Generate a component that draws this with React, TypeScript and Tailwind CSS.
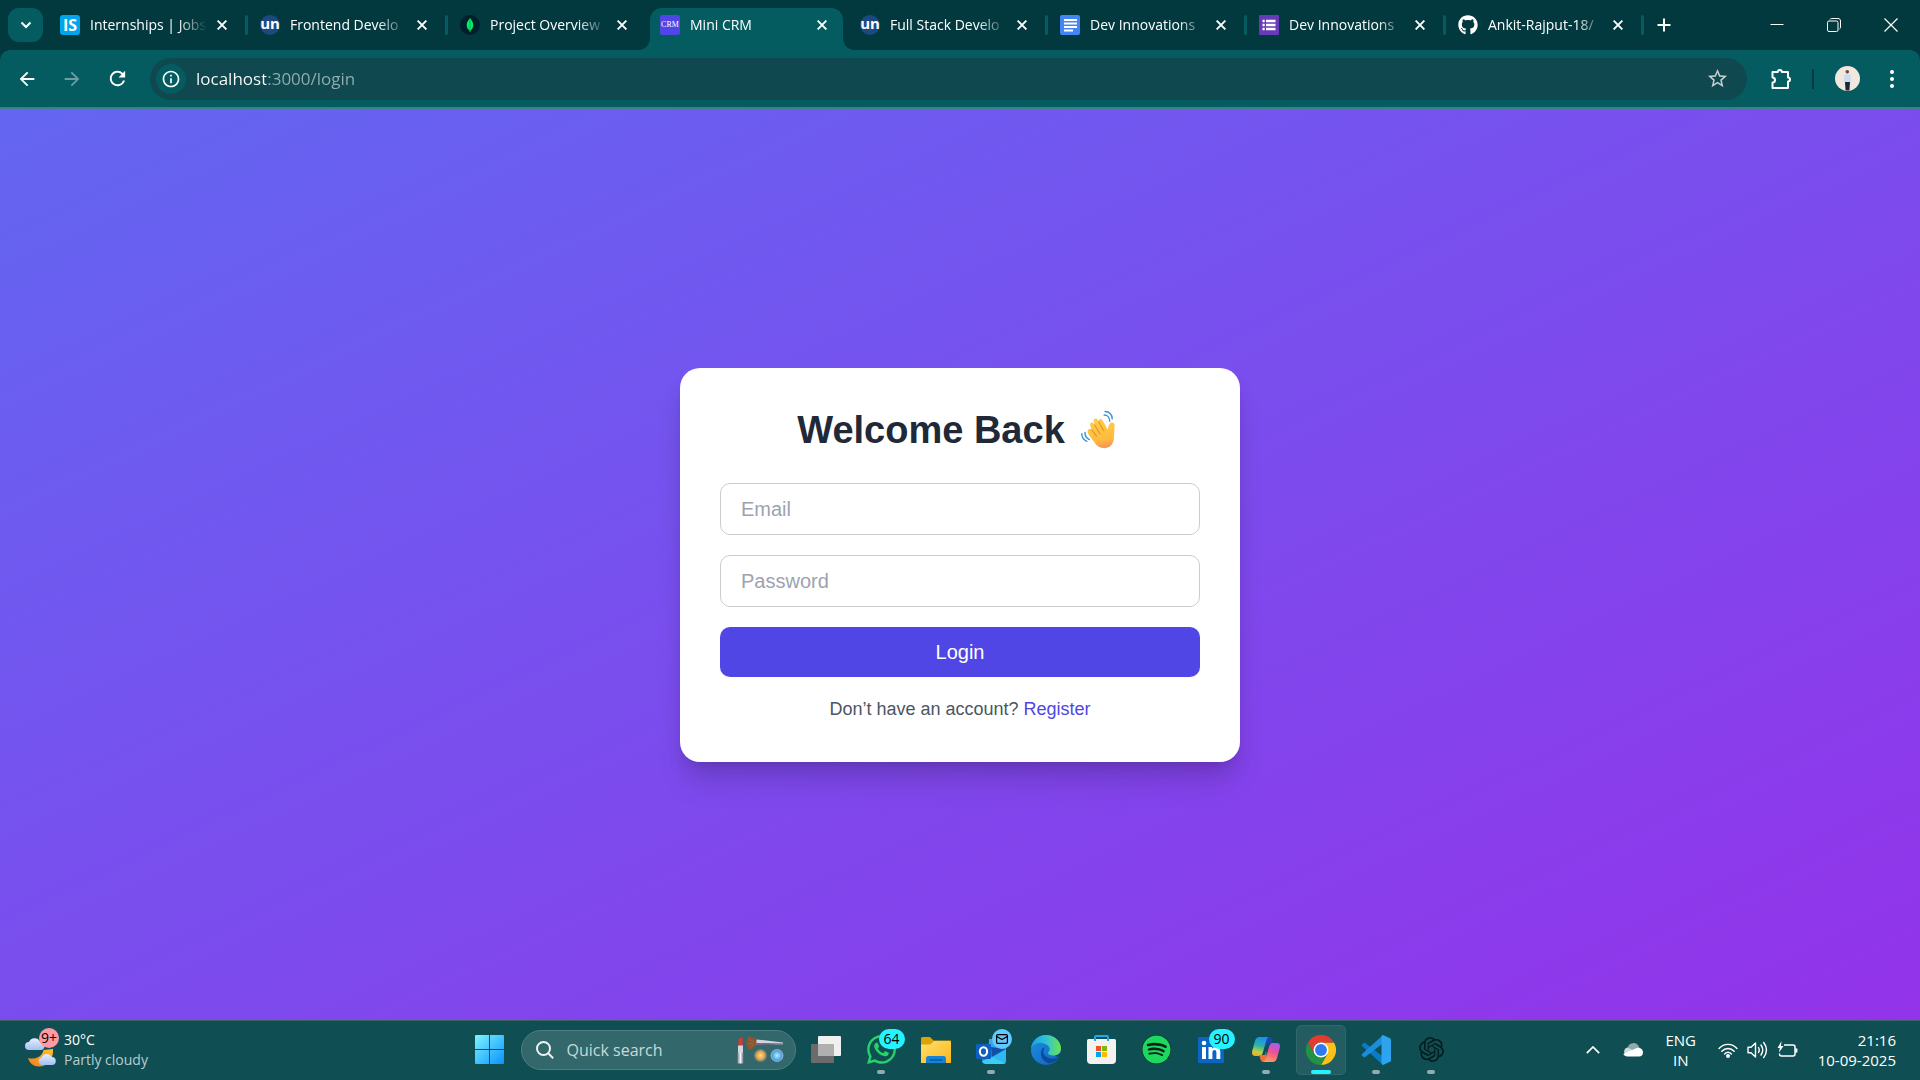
import { useState, type ReactNode } from "react";
import { FaGithub, FaSpotify, FaWhatsapp } from "react-icons/fa6";
import { SiOpenai } from "react-icons/si";
import { MdArrowBack, MdArrowForward, MdInfoOutline, MdRefresh, MdStarBorder } from "react-icons/md";

const uiFont = "font-['Segoe_UI','Open_Sans','Noto_Sans',sans-serif]";

/* ---------- favicons ---------- */

const InternshalaIcon = () => (
  <span className="flex size-5 shrink-0 items-center justify-center rounded-[3px] bg-[#00a5ec] font-['Open_Sans',sans-serif] text-[16px] leading-5 font-bold text-white">
    IS
  </span>
);

const UnstopIcon = () => (
  <span className="flex size-5 shrink-0 items-center justify-center rounded-full bg-[#1c4980] pb-1 font-['Open_Sans',sans-serif] text-[15px] leading-5 font-bold text-white">
    un
  </span>
);

const MongoIcon = () => (
  <svg viewBox="0 0 20 20" className="size-5 shrink-0">
    <circle cx="10" cy="10" r="10" fill="#001e2b" />
    <path d="M10 3c.9 1.600 3.300 3.300 3.300 7.200 0 2.700-1.500 4.400-2.800 5.300L10.300 17h-.6l-.2-1.500c-1.300-.9-2.800-2.600-2.800-5.300C6.700 6.300 9.100 4.600 10 3z" fill="#00ed64" />
    <path d="M10 3.500v13" stroke="#00a046" strokeWidth=".6" />
  </svg>
);

const CrmIcon = () => (
  <span className="flex size-5 shrink-0 items-center justify-center rounded-[2px] bg-[#4f46e5] font-['Liberation_Serif',serif] text-[8px] leading-5 text-white">
    CRM
  </span>
);

const DocsIcon = () => (
  <svg viewBox="0 0 20 20" className="size-5 shrink-0">
    <rect width="20" height="20" rx="2" fill="#4285f4" />
    <path d="M4 5h13M4 8.500h13M4 12h13M4 15.500h9" stroke="#fff" strokeWidth="2" />
  </svg>
);

const FormsIcon = () => (
  <svg viewBox="0 0 20 20" className="size-5 shrink-0">
    <rect width="20" height="20" rx="1" fill="#673ab7" />
    <path d="M3.500 6h2.200M3.500 10h2.200M3.500 14h2.200M7 6h9.500M7 10h9.500M7 14h9.500" stroke="#fff" strokeWidth="2.300" />
  </svg>
);

type Tab = { title: string; icon: ReactNode; width: string; active?: boolean; beforeActive?: boolean };

const tabs: Tab[] = [
  { title: "Internships | Jobs", icon: <InternshalaIcon />, width: "w-[200px]" },
  { title: "Frontend Develo", icon: <UnstopIcon />, width: "w-[200px]" },
  { title: "Project Overview", icon: <MongoIcon />, width: "w-[200px]", beforeActive: true },
  { title: "Mini CRM", icon: <CrmIcon />, width: "w-[200px]", active: true },
  { title: "Full Stack Develo", icon: <UnstopIcon />, width: "w-[200px]" },
  { title: "Dev Innovations", icon: <DocsIcon />, width: "w-[199px]" },
  { title: "Dev Innovations", icon: <FormsIcon />, width: "w-[199px]" },
  { title: "Ankit-Rajput-18/", icon: <FaGithub className="size-5 shrink-0 text-white" />, width: "w-[198px]" },
];

const CloseGlyph = () => (
  <svg viewBox="0 0 10 10" className="size-[10px]" fill="none" stroke="#fff" strokeWidth="1.900">
    <path d="M.6.6l8.800 8.800M9.400.6L.6 9.400" />
  </svg>
);

function BrowserTab({ tab }: { tab: Tab }) {
  return (
    <div className={`relative flex h-[50px] items-center pl-3 ${tab.width}`}>
      {tab.active && (
        <svg viewBox="0 0 217 42" preserveAspectRatio="none" className="absolute bottom-0 -left-[10px] h-[42px] w-[217px]" fill="#045c61">
          <path d="M0 42c7 0 12-5 12-12V12C12 5 17 0 24 0h169c7 0 12 5 12 12v18c0 7 5 12 12 12z" />
        </svg>
      )}
      <button className="relative flex min-w-0 flex-1 items-center text-left">
        {tab.icon}
        <span className="ml-[10px] w-[117px] overflow-hidden text-[14px] leading-5 whitespace-nowrap text-white mask-r-from-75% mask-r-to-100%">
          {tab.title}
        </span>
      </button>
      <button aria-label={`Close ${tab.title}`} className="relative mr-5 p-[1px]">
        <CloseGlyph />
      </button>
      {!tab.active && !tab.beforeActive && <span className="absolute top-[15px] right-0 h-5 w-[3px] rounded bg-[#045c61]" />}
    </div>
  );
}

function TabStrip() {
  return (
    <div className="flex h-[50px] items-center bg-[#02393e] pl-2">
      <button aria-label="Search tabs" className="mr-[5px] flex h-[34px] w-[35px] items-center justify-center rounded-[11px] bg-[#045c61]">
        <svg viewBox="0 0 12 8" className="h-2 w-3" fill="none" stroke="#fff" strokeWidth="2">
          <path d="M1.500 1.500L6 6l4.500-4.500" />
        </svg>
      </button>
      {tabs.map((t, i) => (
        <BrowserTab key={i} tab={t} />
      ))}
      <button aria-label="New tab" className="ml-3 p-[1px]">
        <svg viewBox="0 0 14 14" className="size-[14px]" stroke="#fff" strokeWidth="2">
          <path d="M7 .5v13M.5 7h13" />
        </svg>
      </button>
      <div className="ml-auto flex items-center pr-[1px]">
        <button aria-label="Minimise" className="flex w-[57px] justify-center">
          <svg viewBox="0 0 14 14" className="size-[14px]" stroke="#fff">
            <path d="M.5 6.500h13" />
          </svg>
        </button>
        <button aria-label="Restore" className="flex w-[57px] justify-center">
          <svg viewBox="0 0 14 14" className="size-[14px]" fill="none" stroke="#fff">
            <rect x=".5" y="3" width="10.500" height="10.500" rx="1.500" />
            <path d="M3 1.500C3.300.8 4 .5 4.800.5H11c1.500 0 2.500 1 2.500 2.500v6.200c0 .8-.3 1.500-1 1.800" />
          </svg>
        </button>
        <button aria-label="Close window" className="flex w-[57px] justify-center">
          <svg viewBox="0 0 14 14" className="size-[14px]" stroke="#fff" strokeWidth="1.200">
            <path d="M.5.5l13 13M13.500.5l-13 13" />
          </svg>
        </button>
      </div>
    </div>
  );
}

function Toolbar() {
  const [url, setUrl] = useState("localhost:3000/login");
  return (
    <div className="bg-[#02393e]">
      <div className="flex h-[59px] items-center rounded-t-[10px] border-b-2 border-[#3b8085] bg-[#045c61] pr-5 pl-4">
        <button aria-label="Back" className="mr-[23px]"><MdArrowBack className="size-[22px] text-white" /></button>
        <button aria-label="Forward" className="mr-[23px]"><MdArrowForward className="size-[22px] text-[#6b9ea1]" /></button>
        <button aria-label="Reload" className="mr-[21px]"><MdRefresh className="size-[23px] text-white" /></button>
        <div className="flex h-[42px] flex-1 items-center rounded-full bg-[#0f484e] pr-[18px] pl-[6px]">
          <button aria-label="Site information" className="flex size-[30px] items-center justify-center rounded-full bg-[#045c61]">
            <MdInfoOutline className="size-5 text-white" />
          </button>
          <input
            aria-label="Address"
            value={url}
            onChange={(e) => setUrl(e.target.value)}
            className="ml-[10px] min-w-0 flex-1 bg-[linear-gradient(90deg,#ffffff_70px,#92b0b3_70px)] bg-clip-text pt-[1px] text-[17px] leading-6 text-transparent caret-white outline-none"
          />
          <button aria-label="Bookmark this page"><MdStarBorder className="size-[23px] text-[#c3cfd0]" /></button>
        </div>
        <button aria-label="Extensions" className="ml-[23px]">
          <svg viewBox="0 0 22 22" className="size-[22px]" fill="none" stroke="#fff" strokeWidth="2" strokeLinejoin="round">
            <path d="M2.500 4h5.300a2 2 0 0 1 4 0h6.200v5.500a2 2 0 0 1 0 4V20H2.500v-5.500a2.500 2.500 0 0 0 0-5z" />
          </svg>
        </button>
        <span className="ml-[20px] h-5 w-[2px] bg-[#023b40]" />
        <button aria-label="Profile" className="ml-[21px]">
          <svg viewBox="0 0 25 25" className="size-[25px]">
            <circle cx="12.500" cy="12.500" r="12.500" fill="#f1e7df" />
            <path d="M9.500 9c1-1.500 5-1.500 6 0l.8 7.500H8.700z" fill="#c9dcf2" />
            <path d="M10 16h5l-.6 8.600h-3.800z" fill="#1f2530" />
            <circle cx="12.300" cy="5.800" r="1.800" fill="#6a4a3c" />
          </svg>
        </button>
        <button aria-label="Menu" className="ml-[24px]">
          <svg viewBox="0 0 16 20" className="h-5 w-4" fill="#fff">
            <circle cx="8" cy="3" r="2" />
            <circle cx="8" cy="10" r="2" />
            <circle cx="8" cy="17" r="2" />
          </svg>
        </button>
      </div>
    </div>
  );
}

/* ---------- login page ---------- */

const WavingHand = () => (
  <svg viewBox="0 0 52 45" className="h-[42px] w-[49px]" role="img" aria-label="Waving hand">
    <defs>
      <linearGradient id="hand" x1="0" y1="0" x2=".2" y2="1">
        <stop offset="0" stopColor="#ffcf4c" />
        <stop offset=".8" stopColor="#ffbb3e" />
        <stop offset="1" stopColor="#f79a55" />
      </linearGradient>
    </defs>
    <path
      d="M14.500 23c.8-2 2.800-2.400 4.300-.8l-1.700-4.400c-1.100-3 2.300-4.600 3.900-1.900l.8 1.300-1-4c-.8-3 3-4.300 4.400-1.400l.8 1.800c-.7-3 3.200-4.200 4.500-1.400l5.300 9.800 1.500-5.200c1.300-3.600 6.300-2.600 6 1.200L42.500 31c-.5 6.800-4.500 11-10.500 11-4.300 0-7.500-2.200-9.800-5.300l-7-9.700c-.9-1.300-1.200-2.700-.7-4z"
      fill="url(#hand)"
    />
    <path d="M18.800 22.200l5 6.800M21.800 17.200l5.700 9.300M26.200 13.600l5.300 9.600" stroke="#e39428" strokeWidth="1.200" strokeLinecap="round" fill="none" />
    <path d="M32 6.500c3.500 0 6 2.700 6 6.500M33 2.700c4.500 0 7.700 3.300 7.700 7.800M11.500 25c-.2 3.500 1.500 6.300 4.700 7.700M8 26.500c.2 4 2.200 6.700 5.500 8.200" stroke="#3192dc" strokeWidth="1.500" strokeLinecap="round" fill="none" />
  </svg>
);

function LoginPage() {
  return (
    <main className="flex flex-1 items-center justify-center bg-[linear-gradient(to_bottom_right,#6366f1,#9333ea)] font-['Liberation_Sans',Arial,sans-serif]">
      <div className="w-full max-w-[560px] rounded-[20px] bg-white p-10 shadow-[0_12px_19px_-4px_rgba(0,0,0,0.1),0_5px_8px_-5px_rgba(0,0,0,0.1),0_25px_32px_-6px_rgba(0,0,0,0.12)]">
        <h2 className="mb-[30px] flex h-[45px] items-center justify-center gap-[9px] text-[38px] leading-[45px] font-bold text-[#1f2937]">
          Welcome Back <WavingHand />
        </h2>
        <form className="flex flex-col gap-5" onSubmit={(e) => e.preventDefault()}>
          <input
            type="email"
            aria-label="Email"
            placeholder="Email"
            className="w-full rounded-[10px] border border-[#cccccc] px-5 py-[10px] text-xl leading-[30px] text-[#1f2937] placeholder:text-[#9ca3af]"
          />
          <input
            type="password"
            aria-label="Password"
            placeholder="Password"
            className="w-full rounded-[10px] border border-[#cccccc] px-5 py-[10px] text-xl leading-[30px] text-[#1f2937] placeholder:text-[#9ca3af]"
          />
          <button type="submit" className="w-full rounded-[10px] bg-[#4f46e5] py-[10px] text-xl leading-[30px] text-white">
            Login
          </button>
        </form>
        <p className="mt-5 text-center text-[18px] leading-[25px] text-[#4b5563]">
          Don’t have an account?{" "}
          <a href="#register" className="text-[#4f46e5]">
            Register
          </a>
        </p>
      </div>
    </main>
  );
}

/* ---------- taskbar icons ---------- */

const WeatherIcon = () => (
  <svg viewBox="0 0 34 36" className="h-9 w-[34px]">
    <defs>
      <linearGradient id="cloud" x1="0" y1="0" x2="0" y2="1">
        <stop offset="0" stopColor="#e6effd" />
        <stop offset="1" stopColor="#a3c0f0" />
      </linearGradient>
      <linearGradient id="moon" x1="1" y1="0" x2="0" y2="1">
        <stop offset="0" stopColor="#ffc02e" />
        <stop offset="1" stopColor="#ef7d1c" />
      </linearGradient>
    </defs>
    <path d="M28 17c.8 10-5.500 17.500-14 17.500-5.500 0-9.500-3.500-11-8.500 7 2 14-1 15.500-8z" fill="url(#moon)" />
    <path d="M4 18a4 4 0 0 1 0-8 6 6 0 0 1 11-.5 4.500 4.500 0 0 1 2 8.500z" fill="url(#cloud)" />
    <path d="M16 33a4 4 0 0 1 .5-7.500 5.500 5.500 0 0 1 10-.5A4 4 0 0 1 27 33z" fill="url(#cloud)" />
  </svg>
);

const StartIcon = () => (
  <svg viewBox="0 0 29 29" className="size-[29px]">
    <defs>
      <linearGradient id="win" x1="0" y1="0" x2="1" y2="1">
        <stop offset="0" stopColor="#7df3ff" />
        <stop offset="1" stopColor="#0a93fb" />
      </linearGradient>
    </defs>
    <path d="M0 1q0-1 1-1h13v14H0zM15 0h13q1 0 1 1v13H15zM0 15h14v14H1q-1 0-1-1zM15 15h14v13q0 1-1 1H15z" fill="url(#win)" />
  </svg>
);

const MakeupArt = () => (
  <svg viewBox="0 0 48 28" className="h-7 w-12">
    <defs>
      <linearGradient id="metal" x1="0" y1="0" x2="1" y2="0">
        <stop offset="0" stopColor="#81869a" />
        <stop offset=".5" stopColor="#f2f3f8" />
        <stop offset="1" stopColor="#6b7085" />
      </linearGradient>
      <radialGradient id="gold"><stop offset="0" stopColor="#fbe08a" /><stop offset="1" stopColor="#cf962f" /></radialGradient>
      <radialGradient id="blue"><stop offset="0" stopColor="#c4efff" /><stop offset="1" stopColor="#2f9ee8" /></radialGradient>
    </defs>
    <path d="M1.500 10V3.500L5.500.5V10z" fill="#e8322c" />
    <rect x="1" y="9.500" width="5" height="8" fill="#d5d7e0" />
    <rect x=".5" y="16.500" width="6" height="11" fill="url(#metal)" />
    <path d="M11.500.5c4-.5 8 2 9 5.500-.5 4-4.500 7.500-8.500 8-3-3-4-10-.5-13.500z" fill="#8a5632" />
    <path d="M12 3.500l5 2.500M11 8l5-.5M12.500 12l4-3.500" stroke="#a8703f" strokeWidth=".7" />
    <path d="M19.500 3.500L46 6.500v2l-26.500.5z" fill="#d2d5df" />
    <path d="M19.500 7L46 7.500v1l-26.500 1z" fill="#60657c" />
    <circle cx="23.500" cy="19.500" r="6.500" fill="#727a92" />
    <circle cx="23.500" cy="19.500" r="5.200" fill="url(#gold)" />
    <circle cx="40" cy="19.500" r="6.500" fill="#93a8c0" />
    <circle cx="40" cy="19.500" r="5.200" fill="url(#blue)" />
  </svg>
);

const TaskViewIcon = () => (
  <svg viewBox="0 0 30 27" className="h-[27px] w-[30px]">
    <rect y="8" width="23" height="19" rx="1" fill="#6b6b6b" />
    <rect x="7" width="23" height="20" rx="1" fill="#f0f0f0" />
    <path d="M7 8h15a1 1 0 0 1 1 1v11H8a1 1 0 0 1-1-1z" fill="#b0b0b0" />
  </svg>
);

const ExplorerIcon = () => (
  <svg viewBox="0 0 30 26" className="h-[26px] w-[30px]">
    <defs>
      <linearGradient id="folder" x1="0" y1="0" x2="1" y2="1">
        <stop offset="0" stopColor="#ffdf70" />
        <stop offset="1" stopColor="#fbb818" />
      </linearGradient>
    </defs>
    <path d="M0 1.500Q0 0 1.500 0H9l3.500 3.500H30V10H0z" fill="#e0a106" />
    <path d="M0 7.500h9.500L13 4h15.500Q30 4 30 5.500V26H0z" fill="url(#folder)" />
    <path d="M5 26v-4.500Q5 19 7.500 19h15q2.500 0 2.500 2.500V26z" fill="#1583d8" />
    <path d="M9 23h12" stroke="#0b5aa5" strokeWidth="1.400" strokeLinecap="round" />
  </svg>
);

const OutlookIcon = () => (
  <svg viewBox="0 0 30 30" className="size-[30px]">
    <path d="M6 13L18 4.500 30 13v14a2 2 0 0 1-2 2H10a4 4 0 0 1-4-4z" fill="#1b86da" />
    <path d="M13 4h13v14H13z" fill="#36a7ec" />
    <path d="M30 13L16 20.500V28h12q2 0 2-2z" fill="#2fb9f2" />
    <path d="M15 12l15 2-14 8z" fill="#1450a8" />
    <path d="M6 26l10-4 13 6.500q-1 .5-2 .5H10q-3 0-4-3z" fill="#3ccdf5" />
    <rect y="9" width="15" height="15" rx="1.300" fill="#0f5fc0" />
    <ellipse cx="7.500" cy="16.500" rx="3.600" ry="4.200" fill="none" stroke="#fff" strokeWidth="2.100" />
  </svg>
);

const EdgeIcon = () => (
  <svg viewBox="0 0 30 30" className="size-[30px]">
    <defs>
      <linearGradient id="edgeTop" x1="0" y1=".3" x2="1" y2=".3">
        <stop offset="0" stopColor="#1b9ee8" />
        <stop offset=".5" stopColor="#31c3d6" />
        <stop offset="1" stopColor="#6be34e" />
      </linearGradient>
      <linearGradient id="edgeLeft" x1="0" y1="0" x2="1" y2="1">
        <stop offset="0" stopColor="#1a92e0" />
        <stop offset="1" stopColor="#1460c0" />
      </linearGradient>
    </defs>
    <circle cx="15" cy="15" r="15" fill="url(#edgeLeft)" />
    <path d="M0 13.500C1 5.500 7 0 15 0c9 0 15 6.500 15 13.500 0 4.500-3.500 7-7.500 7-3.500 0-5.500-1.200-5.500-2.500 0-1 1.700-1.500 1.700-4C18.700 10.500 14 8 9.500 8 5 8 1.500 10 0 13.500z" fill="url(#edgeTop)" />
    <path d="M11 14c-3 5 0 12 7 14.500 3.500-.3 8-3 10-6.500-6 3-14 1.500-15.500-4C12 16 12.500 14 14 12.500c-1.500 0-2.500.8-3 1.500z" fill="#0c4a9a" />
    <path d="M24 20.400c3-.1 5.300-1.700 5.900-4 .2 2-.5 4-1.600 5.600l-1.500.5c.3-.9-.8-.9-2.800-2.100z" fill="#0f4f54" />
  </svg>
);

const StoreIcon = () => (
  <svg viewBox="0 0 29 29" className="size-[29px]">
    <path d="M8 7V2q0-1 1-1h11q1 0 1 1v5" fill="none" stroke="#22a7ec" strokeWidth="2" />
    <path d="M0 5.500Q0 4 1.500 4h26Q29 4 29 5.500V25q0 4-4 4H4q-4 0-4-4z" fill="#f3f2f1" />
    <path d="M8 6V3M21 6V3" stroke="#22a7ec" strokeWidth="2" />
    <path d="M9 11h5v5H9z" fill="#f25022" />
    <path d="M15 11h5v5h-5z" fill="#7fba00" />
    <path d="M9 17h5v5H9z" fill="#00a4ef" />
    <path d="M15 17h5v5h-5z" fill="#ffb900" />
  </svg>
);

const SpotifyIcon = () => (
  <span className="rounded-full bg-[#0c1f18]">
    <FaSpotify className="size-[29px] text-[#1ed760]" />
  </span>
);

const LinkedInIcon = () => (
  <svg viewBox="0 0 26 26" className="size-[26px]">
    <rect width="26" height="26" rx="1" fill="#0a66c2" />
    <circle cx="6" cy="6" r="2.300" fill="#fff" />
    <path d="M4 10h4v12H4zM10.500 10h3.700v1.700c.8-1.300 2.200-2 3.800-2 3.400 0 4.300 2.300 4.300 5.500V22h-3.900v-6c0-1.600-.3-2.900-1.900-2.900s-2.100 1.200-2.100 2.800V22h-3.900z" fill="#fff" />
  </svg>
);

const CopilotIcon = () => (
  <svg viewBox="0 0 28 25" className="h-[25px] w-7">
    <defs>
      <linearGradient id="cpA" x1=".5" y1="0" x2=".3" y2="1">
        <stop offset="0" stopColor="#1a8ff0" />
        <stop offset=".45" stopColor="#2bb3a8" />
        <stop offset=".8" stopColor="#c8cf3a" />
        <stop offset="1" stopColor="#f5a623" />
      </linearGradient>
      <linearGradient id="cpB" x1=".7" y1="0" x2=".4" y2="1">
        <stop offset="0" stopColor="#a35cf0" />
        <stop offset=".5" stopColor="#f0538f" />
        <stop offset="1" stopColor="#ff9a5c" />
      </linearGradient>
    </defs>
    <path d="M14 0h3c2 0 2.700 1.500 3.200 3.500L21 7h-5l-3 4z" fill="#1747b5" />
    <path d="M7.500 0H17c-1.500.5-2.300 2-3 4.500L11 15c-.8 3-2 4-4.500 4H3c-3 0-3.500-2.500-2.500-6l2.300-8.500C3.700 1.500 5 0 7.500 0z" fill="url(#cpA)" />
    <path d="M7 18h6l1-4 1 11h-3.500c-2 0-2.700-1.500-3.200-3.500z" fill="#f0703c" />
    <path d="M20.500 25H11c1.500-.5 2.300-2 3-4.500L17 10c.8-3 2-4 4.500-4H25c3 0 3.500 2.500 2.500 6l-2.300 8.500c-.9 3-2.200 4.500-4.700 4.500z" fill="url(#cpB)" />
  </svg>
);

const ChromeIcon = () => (
  <svg viewBox="0 0 48 48" className="size-[30px]">
    <path d="M24 12h20.800A24 24 0 0 1 24 48l10.400-18z" fill="#fbc116" />
    <path d="M3.200 12A24 24 0 0 0 24 48l10.400-18a12 12 0 0 1-20.800 0z" fill="#229342" />
    <path d="M3.200 12A24 24 0 0 1 44.800 12H24a12 12 0 0 0-10.400 18z" fill="#e33b2e" />
    <circle cx="24" cy="24" r="12" fill="#fff" />
    <circle cx="24" cy="24" r="9.500" fill="#2f7af0" />
  </svg>
);

const VsCodeIcon = () => (
  <svg viewBox="0 0 30 30" className="size-[30px]">
    <path d="M22 30L1 11q-.8-.8 0-1.500l1.700-1.500q.7-.6 1.500 0L22.500 22z" fill="#0b7bc8" />
    <path d="M22 0L1 19q-.8.800 0 1.500L2.700 22q.7.600 1.500 0L22.500 8z" fill="#1a8ddb" />
    <path d="M22 0l7 3.200q1 .5 1 1.600v20.400q0 1.100-1 1.600L22 30q-1.500-.3-1.500-2V2q0-1.700 1.500-2z" fill="#2ea3ee" />
  </svg>
);

const Badge = ({ children }: { children: ReactNode }) => (
  <span className="absolute top-2 left-[25px] flex h-5 w-[26px] items-center justify-center rounded-full bg-[#26f3ff] text-[14px] leading-5 text-black">
    {children}
  </span>
);

const MailBadge = () => (
  <span className="absolute top-2 left-[28px] flex size-5 items-center justify-center rounded-full bg-[#63c8ff]">
    <svg viewBox="0 0 12 10" className="h-[10px] w-3" fill="none" stroke="#000" strokeWidth="1.200">
      <rect x=".6" y=".6" width="10.800" height="8.800" rx="1.200" />
      <path d="M.8 2.500L6 5.500l5.200-3" />
    </svg>
  </span>
);

type App = { name: string; icon: ReactNode; badge?: ReactNode; state?: "open" | "active" };

const apps: App[] = [
  { name: "Task view", icon: <TaskViewIcon /> },
  { name: "WhatsApp", icon: <FaWhatsapp className="size-[33px] text-[#25d366]" />, badge: <Badge>64</Badge>, state: "open" },
  { name: "File Explorer", icon: <ExplorerIcon /> },
  { name: "Outlook", icon: <OutlookIcon />, badge: <MailBadge />, state: "open" },
  { name: "Edge", icon: <EdgeIcon /> },
  { name: "Microsoft Store", icon: <StoreIcon /> },
  { name: "Spotify", icon: <SpotifyIcon /> },
  { name: "LinkedIn", icon: <LinkedInIcon />, badge: <Badge>90</Badge> },
  { name: "Copilot", icon: <CopilotIcon />, state: "open" },
  { name: "Chrome", icon: <ChromeIcon />, state: "active" },
  { name: "Visual Studio Code", icon: <VsCodeIcon />, state: "open" },
  { name: "ChatGPT", icon: <SiOpenai className="size-[25px] text-[#051c1f]" />, state: "open" },
];

function Taskbar() {
  return (
    <footer className="grid h-[60px] grid-cols-[1fr_auto_1fr] items-center border-t border-[#3a6263] bg-[#0f4f54] pb-[2px]">
      <button className="relative flex items-center pl-[25px] text-left">
        <WeatherIcon />
        <span className="absolute -top-[2px] left-[39px] flex size-5 items-center justify-center rounded-full bg-[#ff99a4] text-[14px] leading-5 text-black">9+</span>
        <span className="ml-[5px] flex flex-col text-[14px] leading-5">
          <span className="text-white">30°C</span>
          <span className="text-[#b8cccd]">Partly cloudy</span>
        </span>
      </button>

      <div className="flex items-center">
        <button aria-label="Start" className="flex w-[55px] justify-center">
          <StartIcon />
        </button>
        <label className="mr-[3px] ml-1 flex h-10 w-[275px] items-center rounded-full border border-[#4c7f81] bg-[#32686b] pr-[10px] pl-[14px]">
          <svg viewBox="0 0 18 18" className="size-[18px] shrink-0" fill="none" stroke="#eef3f3" strokeWidth="2">
            <circle cx="7.500" cy="7.500" r="6.500" />
            <path d="M12.200 12.200l5 5" />
          </svg>
          <input aria-label="Quick search" placeholder="Quick search" className="ml-[13px] min-w-0 flex-1 text-[16px] leading-6 text-white outline-none placeholder:text-[#c9d8d9]" />
          <MakeupArt />
        </label>
        {apps.map((a) => (
          <button key={a.name} aria-label={a.name} className="relative flex h-[57px] w-[55px] items-center justify-center">
            {a.state === "active" && <span className="absolute top-1 left-[2px] size-[50px] rounded-[5px] border border-[#32686b] bg-[#245d61]" />}
            <span className="relative flex">{a.icon}</span>
            {a.badge}
            {a.state === "open" && <span className="absolute bottom-1 left-[23px] h-1 w-2 rounded-full bg-[#93adaf]" />}
            {a.state === "active" && <span className="absolute bottom-1 left-[17px] h-1 w-5 rounded-full bg-[#26f3ff]" />}
          </button>
        ))}
      </div>

      <div className="flex items-center justify-end pr-6 text-[15px] leading-5 text-white">
        <button aria-label="Show hidden icons">
          <svg viewBox="0 0 14 8" className="h-2 w-[14px]" fill="none" stroke="#fff" strokeWidth="1.700">
            <path d="M.8 7.200L7 1l6.200 6.200" />
          </svg>
        </button>
        <button aria-label="OneDrive" className="ml-[23px]">
          <svg viewBox="0 0 20 14" className="h-[14px] w-5">
            <path d="M4 6C5 2 7.500 0 10.500 0c3 0 5 1.800 5.800 4.500L10 9z" fill="#8eaaac" />
            <path d="M4.500 13A4.300 4.300 0 0 1 4.500 4.600L18 11l-1 2z" fill="#cfdcdd" />
            <path d="M4.500 13.500c-2 0-3.500-1-4.200-2.500L12 5.800c4.500-2.500 8 .5 8 3.700 0 2.500-1.600 4-4 4z" fill="#fff" />
          </svg>
        </button>
        <button className="ml-[22px] flex w-[32px] flex-col text-center">
          <span>ENG</span>
          <span>IN</span>
        </button>
        <button aria-label="Network, volume and battery" className="ml-[21px] flex items-center gap-[9px]">
          <svg viewBox="0 0 20 16" className="h-4 w-5" fill="none" stroke="#fff" strokeWidth="1.400" strokeLinecap="round">
            <path d="M1 6.500c5-5.500 13-5.500 18 0M3.800 9.300c3.500-3.800 8.900-3.800 12.400 0M6.600 12c2-2 4.800-2 6.800 0" />
            <circle cx="10" cy="14" r="1.300" fill="#fff" />
          </svg>
          <svg viewBox="0 0 21 18" className="h-[18px] w-[21px]" fill="none" stroke="#fff" strokeWidth="1.400" strokeLinejoin="round" strokeLinecap="round">
            <path d="M1 6.300h3L8.500 2v14L4 11.700H1z" />
            <path d="M11.500 6.500q1.500 2.500 0 5M14 4q3.500 5 0 10M16.700 1.500q5.500 7.500 0 15" />
          </svg>
          <svg viewBox="0 0 21 17" className="h-[17px] w-[21px]" fill="none" stroke="#fff" strokeWidth="1.500">
            <path d="M7 4h9q2 0 2 2v7q0 2-2 2H4.500q-2 0-2-2v-.5" />
            <path d="M19.300 7.500v4" strokeWidth="2.200" />
            <path d="M4.500 0L.5 7h2.300L2 11.500 6.500 5H4z" fill="#fff" stroke="none" />
          </svg>
        </button>
        <button className="ml-5 flex flex-col text-right">
          <span>21:16</span>
          <span>10-09-2025</span>
        </button>
      </div>
    </footer>
  );
}

export default function App() {
  return (
    <div className={`flex min-h-screen flex-col ${uiFont}`}>
      <header>
        <TabStrip />
        <Toolbar />
      </header>
      <LoginPage />
      <Taskbar />
    </div>
  );
}
